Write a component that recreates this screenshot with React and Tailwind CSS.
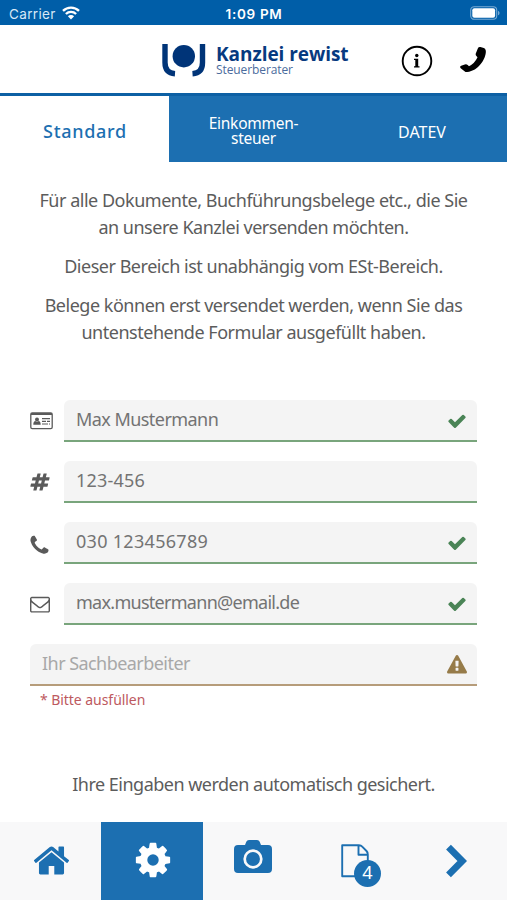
import React from "react";

// 1792 unit glyphs used in the form and the bottom bar
const ICONS = {
  check:
    "M1671 566q0 40-28 68l-724 724-136 136q-28 28-68 28t-68-28l-136-136-362-362q-28-28-28-68t28-68l136-136q28-28 68-28t68 28l294 295 656-657q28-28 68-28t68 28l136 136q28 28 28 68z",
  home: "M1472 992v480q0 26-19 45t-45 19h-384v-384h-256v384h-384q-26 0-45-19t-19-45v-480q0-1 .5-3t.5-3l575-474 575 474q1 2 1 6zm223-69l-62 74q-8 9-21 11h-3q-13 0-21-7l-692-577-692 577q-12 8-24 7-13-2-21-11l-62-74q-8-10-7-23.5t11-21.5l719-599q32-26 76-26t76 26l244 204v-195q0-14 9-23t23-9h192q14 0 23 9t9 23v408l219 182q10 8 11 21.5t-7 23.5z",
  phone:
    "M1600 1240q0 27-10 70.5t-21 68.5q-21 50-122 106-94 51-186 51-27 0-52.5-3.5t-57.5-12.5-47.5-14.5-55.5-20.5-49-18q-98-35-175-83-128-79-264.5-215.5t-215.5-264.5q-48-77-83-175-3-9-18-49t-20.5-55.5-14.5-47.5-12.5-57.5-3.5-52.5q0-92 51-186 56-101 106-122 25-11 68.5-21t70.5-10q14 0 21 3 18 6 53 76 11 19 30 54t35 63.5 31 53.5q3 4 17.5 25t21.5 35.5 7 28.5q0 20-28.5 50t-62 55-62 53-28.5 46q0 9 5 22.5t8.5 20.5 14 24 11.5 19q76 137 174 235t235 174q2 1 19 11.5t24 14 20.5 8.5 22.5 5q18 0 46-28.5t53-62 55-62 50-28.5q14 0 28.5 7t35.5 21.5 25 17.5q25 15 53.5 31t63.5 35 54 30q70 35 76 53 3 7 3 21z",
  envelope:
    "M1664 1504v-768q-32 36-69 66-268 206-426 338-51 43-83 67t-86.5 48.5-102.5 24.5h-2q-48 0-102.5-24.5t-86.5-48.5-83-67q-158-132-426-338-37-30-69-66v768q0 13 9.5 22.5t22.5 9.5h1472q13 0 22.5-9.5t9.5-22.5zm0-1051v-24.5l-.5-13-3-12.5-5.5-9-9-7.5-14-2.5h-1472q-13 0-22.5 9.5t-9.5 22.5q0 168 147 284 193 152 401 317 6 5 35 29.5t46 37.5 44.5 31.5 50.5 27.5 43 9h2q20 0 43-9t50.5-27.5 44.5-31.5 46-37.5 35-29.5q208-165 401-317 54-43 100.5-115.5t46.5-131.5zm128-37v1088q0 66-47 113t-113 47h-1472q-66 0-113-47t-47-113v-1088q0-66 47-113t113-47h1472q66 0 113 47t47 113z",
  cog: "M1152 896q0-106-75-181t-181-75-181 75-75 181 75 181 181 75 181-75 75-181zm512-109v222q0 12-8 23t-20 13l-185 28q-19 54-39 91 35 50 107 138 10 12 10 25t-9 23q-27 37-99 108t-94 71q-12 0-26-9l-138-108q-44 23-91 38-16 136-29 186-7 28-36 28h-222q-14 0-24.5-8.5t-11.5-21.5l-28-184q-49-16-90-37l-141 107q-10 9-25 9-14 0-25-11-126-114-165-168-7-10-7-23 0-12 8-23 15-21 51-66.5t54-70.5q-27-50-41-99l-183-27q-13-2-21-12.5t-8-23.5v-222q0-12 8-23t19-13l186-28q14-46 39-92-40-57-107-138-10-12-10-24 0-10 9-23 26-36 98.5-107.5t94.5-71.5q13 0 26 10l138 107q44-23 91-38 16-136 29-186 7-28 36-28h222q14 0 24.5 8.5t11.5 21.5l28 184q49 16 90 37l142-107q9-9 24-9 13 0 25 10 129 119 165 170 7 8 7 22 0 12-8 23-15 21-51 66.5t-54 70.5q26 50 41 98l183 28q13 2 21 12.5t8 23.5z",
  warning:
    "M1024 1375v-190q0-14-9.5-23.5t-22.5-9.5h-192q-13 0-22.5 9.5t-9.5 23.5v190q0 14 9.5 23.5t22.5 9.5h192q13 0 22.5-9.5t9.5-23.5zm-2-374l18-459q0-12-10-19-13-11-24-11h-220q-11 0-24 11-10 7-10 21l17 457q0 10 10 16.5t24 6.5h185q14 0 23.5-6.5t10.5-16.5zm-14-934l768 1408q35 63-2 126-17 29-46.5 46t-63.5 17h-1536q-34 0-63.5-17t-46.5-46q-37-63-2-126l768-1408q17-31 47-49t65-18 65 18 47 49z",
  hashtag:
    "M991 1024l64-256h-254l-64 256h254zm768-504l-56 224q-7 24-31 24h-327l-64 256h311q15 0 25 12 10 14 6 28l-56 224q-5 24-31 24h-327l-81 328q-7 24-31 24h-224q-16 0-26-12-9-12-6-28l78-312h-254l-81 328q-7 24-31 24h-225q-15 0-25-12-9-12-6-28l78-312h-311q-15 0-25-12-9-12-6-28l56-224q7-24 31-24h327l64-256h-311q-15 0-25-12-10-14-6-28l56-224q5-24 31-24h327l81-328q7-24 32-24h224q15 0 25 12 9 12 6 28l-78 312h254l81-328q7-24 32-24h224q15 0 25 12 9 12 6 28l-78 312h311q15 0 25 12 9 12 6 28z",
};

function Icon({ name, className }) {
  return (
    <svg viewBox="0 0 1792 1792" fill="currentColor" className={className}>
      <path d={ICONS[name]} />
    </svg>
  );
}

function IdCardIcon() {
  return (
    <svg viewBox="0 0 23 18" fill="currentColor" className="h-[18px] w-[23px]">
      <rect
        x="0.8"
        y="0.8"
        width="21.4"
        height="15.9"
        rx="1.4"
        fill="none"
        stroke="currentColor"
        strokeWidth="1.3"
      />
      <path d="M1 1h21v2H1z" />
      <circle cx="7" cy="7.4" r="2" />
      <path d="M3.3 12.7c0-2.4.9-3.5 2-3.6.9.8 2.5.8 3.4 0 1.1.1 2 1.2 2 3.6z" />
      <path d="M12 6h8v1.2h-8zM12 8.7h4v1.2h-4zM17 8.7h3v1.2h-3zM12 11.4h6v1.2h-6zM19 11.4h1v1.2h-1z" />
    </svg>
  );
}

function StatusBar() {
  return (
    <div className="grid h-[25px] grid-cols-3 items-center bg-[#005ea8] pt-[3px] font-['Inter',sans-serif] text-[13px] text-white">
      <div className="flex items-center gap-1.5 pl-[9px]">
        <span className="text-[13.5px] tracking-[0.35px] text-[#d7e8f6]">
          Carrier
        </span>
        <svg viewBox="0 0 18 14" className="mb-0.5 h-[14px] w-[18px]">
          <g fill="none" stroke="white" strokeWidth="2.3">
            <path d="M1 4.9a11.3 11.3 0 0 1 16 0" />
            <path d="M3.9 8a7.2 7.2 0 0 1 10.2 0" />
          </g>
          <path d="M9 13.6L5.9 10.3a4.400 4.400 0 0 1 6.200 0z" fill="white" />
        </svg>
      </div>
      <div className="pl-px text-center text-[13.5px] font-semibold tracking-[0.7px]">
        1:09 PM
      </div>
      <div className="flex justify-end pr-[7px]">
        <svg viewBox="0 0 30 14" className="mb-0.5 h-[14px] w-[30px]">
          <rect
            x="0.7"
            y="0.7"
            width="26"
            height="12.6"
            rx="3.5"
            fill="none"
            stroke="#78aad3"
            strokeWidth="1.1"
          />
          <rect x="2.3" y="2.3" width="22.8" height="9.4" rx="2" fill="white" />
          <path d="M28 4.7c2 .8 2 3.800 0 4.600z" fill="#78aad3" />
        </svg>
      </div>
    </div>
  );
}

function Header() {
  return (
    <header className="flex h-[71px] items-start border-b-[3px] border-[#0d60a4] bg-white pl-[162px]">
      <svg viewBox="0 0 44 34" className="mt-[18px] h-[34px] w-[44px]">
        <g fill="none" stroke="#003478" strokeWidth="5.4">
          <path d="M3 1v18.500q0 10.600 10 11.300" />
          <path d="M40.500 1v18.500q0 10.600 -10 11.300" />
        </g>
        <circle cx="21.8" cy="13.2" r="11.2" fill="#003478" />
      </svg>
      <div className="mt-[17px] ml-[10px] w-[134px] whitespace-nowrap">
        <div className="font-['Open_Sans',sans-serif] text-[19px] leading-[24px] font-bold tracking-[-0.05px] text-[#073a80]">
          Kanzlei rewist
        </div>
        <div className="-mt-[3px] font-['Open_Sans',sans-serif] text-[12px] leading-[14px] tracking-[-0.1px] text-[#4b6b9d]">
          Steuerberater
        </div>
      </div>
      <svg viewBox="0 0 32 32" className="mt-[20px] ml-[51px] h-8 w-8">
        <circle
          cx="16"
          cy="16"
          r="14.3"
          fill="none"
          stroke="black"
          strokeWidth="1.9"
        />
        <circle cx="15.8" cy="10.5" r="1.7" />
        <path d="M13 13.700h4.200v7.600h1.300v1.200H13v-1.200h1.300v-6.400H13z" />
      </svg>
      <svg viewBox="0 0 27 28" className="mt-[21px] ml-[27px] h-7 w-[27px]">
        <path d="M20.400 1.100l3.400.9q1.500.5 1.900 2.300c1.300 6.400-6.300 20.700-18.500 21.800q-1.900 0-3-1.200L.7 22.200q-1.400-1.700.5-2.500l3.600-1.300q1.700-.6 2.900.6l1.300 1.200q5.800-3 8.500-9l-1.100-1.200q-1.200-1.200-.5-2.800l1.900-4.700q.7-1.700 2.600-1.400z" />
      </svg>
    </header>
  );
}

function Tabs() {
  return (
    <nav className="grid h-[66px] grid-cols-3 bg-[#1c6fb1] text-white">
      <div className="flex items-center justify-center bg-white pt-1 pl-px text-[18px] font-medium tracking-[0.7px] text-[#1c6fb1]">
        Standard
      </div>
      <div className="flex items-center justify-center pt-1 text-center text-[15.5px] leading-[15px] tracking-[-0.25px]">
        <div>
          Einkommen-
          <br />
          steuer
        </div>
      </div>
      <div className="flex items-center justify-center pt-1.5 pr-px text-[16px] tracking-[0px]">
        DATEV
      </div>
    </nav>
  );
}

const fields = [
  {
    icon: "card",
    value: "Max Mustermann",
    valid: true,
    tracking: "tracking-[-0.55px]",
  },
  {
    icon: "hashtag",
    value: "123-456",
    valid: false,
    tracking: "tracking-[0.2px]",
  },
  {
    icon: "phone",
    value: "030 123456789",
    valid: true,
    tracking: "tracking-[0.3px]",
  },
  {
    icon: "envelope",
    value: "max.mustermann@email.de",
    valid: true,
    tracking: "tracking-[-0.72px]",
  },
];

function Field({ icon, value, valid, tracking }) {
  return (
    <div className="flex h-[42px] items-center">
      <div className="w-[34px] shrink-0 text-[#5a5a5a]">
        {icon === "card" ? (
          <IdCardIcon />
        ) : (
          <Icon
            name={icon}
            className={
              icon === "phone" ? "-ml-0.5 mt-1 h-[23px] w-[23px]" : "h-5 w-5"
            }
          />
        )}
      </div>
      <div className="flex h-[42px] flex-1 items-center justify-between rounded-t-[6px] border-b-2 border-[#79a57c] bg-[#f4f4f4] pr-[10px] pl-3">
        <span className={`-mt-0.5 text-[18px] text-[#737373] ${tracking}`}>
          {value}
        </span>
        {valid && (
          <Icon name="check" className="mt-0.5 h-5 w-5 text-[#4a8456]" />
        )}
      </div>
    </div>
  );
}

function BottomBar() {
  return (
    <nav className="grid h-[78px] grid-cols-5 bg-[#f8f8f9] text-[#1c6fb1]">
      <div className="flex items-center justify-center pb-0.5 pl-px">
        <Icon name="home" className="h-[39px] w-[39px]" />
      </div>
      <div className="flex items-center justify-center bg-[#1c6fb1] pb-0.5 pl-px text-white">
        <Icon name="cog" className="h-10 w-10" />
      </div>
      <div className="flex items-start justify-center pt-[18px]">
        <svg viewBox="0 0 38 34" className="h-[34px] w-[38px]">
          <path
            d="M4 5h7l1.300-3.200Q13 0 15 0h8q2 0 2.700 1.800L27 5h7q4 0 4 4v20q0 4-4 4H4q-4 0-4-4V9q0-4 4-4z"
            fill="currentColor"
          />
          <circle
            cx="19"
            cy="19"
            r="8.3"
            fill="none"
            stroke="#f8f8f9"
            strokeWidth="2.7"
          />
        </svg>
      </div>
      <div className="flex items-start justify-center pt-[22px]">
        <div className="relative">
          <svg viewBox="0 0 28 34" className="h-[34px] w-[28px]">
            <path
              d="M1.200 1.200H18Q20 1.200 21.200 2.600L25.500 7Q26.800 8.400 26.800 10.500v21.800H1.200zM17.500 1.500v9.200h9"
              fill="none"
              stroke="currentColor"
              strokeWidth="1.9"
              strokeLinejoin="round"
            />
          </svg>
          <div className="absolute top-[16px] left-[13px] flex h-[27px] w-[27px] items-center justify-center rounded-full bg-[#1c6fb1] pb-0.5 text-[18px] text-white">
            4
          </div>
        </div>
      </div>
      <div className="flex items-center justify-center pb-px">
        <svg viewBox="0 0 22 34" className="h-[34px] w-[22px]">
          <path
            d="M3.500 3.200L17.300 17 3.500 30.800"
            fill="none"
            stroke="currentColor"
            strokeWidth="6.8"
          />
        </svg>
      </div>
    </nav>
  );
}

export default function App() {
  return (
    <div className="flex h-[900px] w-[507px] flex-col overflow-hidden bg-white font-['Noto_Sans',sans-serif]">
      <StatusBar />
      <Header />
      <Tabs />
      <main className="flex flex-1 flex-col px-[30px] pt-[25px] text-[#5c5c5c]">
        <div className="flex flex-col gap-3 text-center text-[18px] leading-[27px] tracking-[-0.48px] whitespace-nowrap">
          <p>
            Für alle Dokumente, Buchführungsbelege etc., die Sie
            <br />
            an unsere Kanzlei versenden möchten.
          </p>
          <p>Dieser Bereich ist unabhängig vom ESt-Bereich.</p>
          <p>
            Belege können erst versendet werden, wenn Sie das
            <br />
            untenstehende Formular ausgefüllt haben.
          </p>
        </div>
        <form className="mt-[54px] flex flex-col gap-[19px]">
          {fields.map((field) => (
            <Field key={field.icon} {...field} />
          ))}
          <div>
            <div className="flex h-[42px] items-center justify-between rounded-t-[6px] border-b-2 border-[#b69c7a] bg-[#f4f4f4] pr-[10px] pl-3">
              <span className="-mt-0.5 text-[18px] tracking-[-0.55px] text-[#a8a8a8]">
                Ihr Sachbearbeiter
              </span>
              <Icon name="warning" className="mt-0.5 h-5 w-5 text-[#967b49]" />
            </div>
            <p className="mt-1 pl-[10px] text-[14px] leading-5 tracking-[-0.05px] text-[#bd5960]">
              * Bitte ausfüllen
            </p>
          </div>
        </form>
        <p className="mt-[61px] text-center text-[18px] leading-[27px] tracking-[-0.51px] whitespace-nowrap">
          Ihre Eingaben werden automatisch gesichert.
        </p>
      </main>
      <BottomBar />
    </div>
  );
}
